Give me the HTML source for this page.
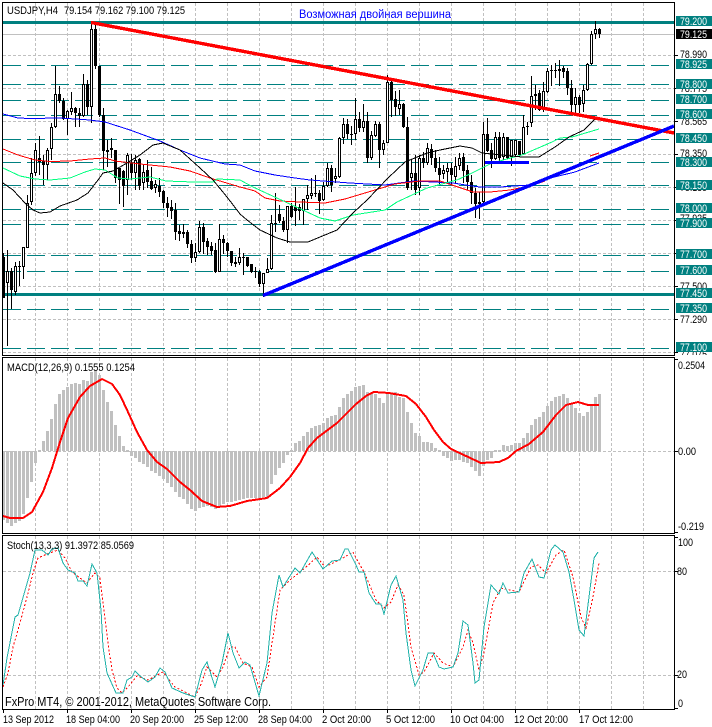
<!DOCTYPE html>
<html><head><meta charset="utf-8"><title>USDJPY,H4</title>
<style>
html,body{margin:0;padding:0;background:#fff}
svg{display:block}
text{font-family:"Liberation Sans",sans-serif;font-size:11px;fill:#000}
.n{fill:none}
</style></head><body>
<svg width="712" height="727" viewBox="0 0 712 727" xmlns="http://www.w3.org/2000/svg">
<rect width="712" height="727" fill="#fff"/>
<!-- grid -->
<g shape-rendering="crispEdges" class="n" fill="none">
<path stroke="#c0c0c0" stroke-dasharray="3 2" d="M35.5 3V355M67.5 3V355M99.5 3V355M131.5 3V355M163.5 3V355M195.5 3V355M227.5 3V355M259.5 3V355M291.5 3V355M323.5 3V355M355.5 3V355M387.5 3V355M419.5 3V355M451.5 3V355M483.5 3V355M515.5 3V355M547.5 3V355M579.5 3V355M611.5 3V355M643.5 3V355M35.5 358V533M67.5 358V533M99.5 358V533M131.5 358V533M163.5 358V533M195.5 358V533M227.5 358V533M259.5 358V533M291.5 358V533M323.5 358V533M355.5 358V533M387.5 358V533M419.5 358V533M451.5 358V533M483.5 358V533M515.5 358V533M547.5 358V533M579.5 358V533M611.5 358V533M643.5 358V533M35.5 536V709M67.5 536V709M99.5 536V709M131.5 536V709M163.5 536V709M195.5 536V709M227.5 536V709M259.5 536V709M291.5 536V709M323.5 536V709M355.5 536V709M387.5 536V709M419.5 536V709M451.5 536V709M483.5 536V709M515.5 536V709M547.5 536V709M579.5 536V709M611.5 536V709M643.5 536V709"/>
<path stroke="#c0c0c0" stroke-dasharray="3 2" d="M3 55.5H674M3 88.5H674M3 121.5H674M3 154.5H674M3 187.5H674M3 220.5H674M3 253.5H674M3 286.5H674M3 319.5H674M3 352.5H674M3 451.5H674M3 571.5H674M3 675.5H674"/>
<path stroke="#c0c0c0" d="M3 34.5H674"/>
<path stroke="#008080" stroke-dasharray="18 6" d="M3 65.5H674M3 84.5H674M3 100.5H674M3 115.5H674M3 139.5H674M3 162.5H674M3 185.5H674M3 209.5H674M3 224.5H674M3 255.5H674M3 271.5H674M3 309.5H674M3 348.5H674"/>
<path stroke="#008080" stroke-width="3" d="M3 22.5H674M3 294.5H674"/>
</g>
<!-- candles -->
<g transform="translate(.5 0)" fill="none" shape-rendering="crispEdges">
<path stroke="#000" d="M3 253V298M7 250V346M11 268V309M15 262V295M19 261V286M23 247V279M27 195V248M31 158V205M35 143V176M39 136V175M43 155V185M47 148V180M51 123V160M55 66V128M59 86V103M63 98V120M67 110V135M71 92V115M75 107V127M79 108V127M83 74V117M87 80V115M91 23V123M95 22V69M99 66V117M103 108V170M107 140V167M111 138V158M115 150V183M119 168V204M123 170V207M127 153V195M131 154V180M135 155V190M139 158V190M143 165V190M147 160V188M151 167V190M155 180V193M159 178V197M163 190V208M167 197V217M171 200V219M175 203V240M179 225V241M183 224V238M187 230V248M191 240V263M195 243V262M199 221V253M203 223V254M207 238V255M211 242V255M215 243V273M219 224V272M223 235V254M227 242V257M231 251V266M235 257V267M239 248V265M243 253V275M247 257V267M251 264V273M255 267V278M259 270V287M263 273V297M267 258V273M271 215V270M275 193V232M279 205V223M283 217V232M287 206V243M291 203V218M295 187V226M299 204V220M303 199V225M307 185V210M311 178V199M315 175V197M319 190V214M323 182V201M327 163V187M331 165V192M335 168V183M339 137V178M343 118V144M347 119V139M351 126V145M355 98V140M359 112V132M363 104V132M367 112V163M371 131V160M375 121V137M379 122V168M383 140V155M387 75V143M391 79V117M395 91V116M399 90V115M403 103V128M407 117V190M411 159V190M415 155V195M419 155V195M423 152V168M427 143V165M431 144V165M435 150V172M439 157V185M443 165V179M447 163V182M451 163V185M455 157V183M459 153V170M463 153V183M467 165V190M471 175V204M475 188V218M479 192V219M483 122V203M487 118V152M491 143V168M495 132V160M499 132V163M503 133V160M507 137V159M511 140V166M515 140V157M519 141V157M523 115V155M527 122V135M531 76V127M535 85V110M539 90V111M543 82V112M547 68V93M551 65V86M555 63V78M559 60V86M563 66V78M567 68V95M571 80V115M575 88V113M579 95V113M583 85V112M587 63V91M591 31V65M595 21V39M599 28V38"/>
<path stroke="#000" stroke-width="3" d="M3 257V298M7 271V283M11 271V290M15 266V292M19 266V267M23 247V267M27 203V248M31 173V202M35 150V173M39 158V162M43 161V165M47 150V165M51 127V149M55 94V127M59 94V101M63 101V119M67 111V119M71 108V112M75 108V113M79 113V116M83 84V116M87 84V107M91 29V107M95 29V66M99 66V115M103 115V151M107 150V152M111 148V150M115 150V178M119 168V180M123 171V186M127 155V180M131 163V173M135 160V173M139 159V186M143 172V183M147 170V182M151 181V189M155 184V188M159 186V192M163 191V203M167 203V208M171 207V211M175 210V232M179 231V234M183 232V234M187 232V244M191 244V258M195 252V258M199 227V252M203 227V242M207 241V247M211 246V251M215 250V272M219 239V272M223 239V243M227 243V251M231 251V263M235 262V264M239 257V263M243 257V258M247 257V266M251 264V272M255 271V272M259 272V284M263 273V284M267 269V273M271 223V269M275 223V224M279 214V221M283 221V230M287 206V230M291 206V217M295 207V211M299 207V211M303 199V211M307 195V199M311 193V196M315 193V194M319 193V201M323 186V200M327 168V186M331 168V185M335 176V179M339 138V177M343 124V138M347 124V134M351 134V135M355 119V134M359 119V128M363 121V128M367 121V158M371 135V158M375 124V136M379 124V150M383 143V150M387 82V143M391 82V100M395 99V107M399 104V109M403 104V127M407 127V188M411 173V178M415 173V190M419 158V188M423 158V163M427 148V163M431 149V158M435 158V168M439 168V175M443 170V174M447 168V172M451 168V175M455 166V177M459 158V166M463 157V171M467 170V182M471 182V193M475 193V204M479 202V204M483 134V202M487 134V151M491 150V159M495 137V159M499 137V158M503 137V157M507 137V158M511 140V157M515 140V155M519 141V155M523 127V154M527 126V127M531 96V123M535 94V96M539 93V110M543 91V110M547 71V92M551 70V71M555 70V71M559 69V71M563 68V72M567 71V88M571 88V105M575 97V105M579 97V105M583 90V104M587 64V90M591 34V64M595 29V34M599 29V34"/>
<path stroke="#fff" d="M7 272V282M15 267V291M23 248V266M27 204V247M31 174V201M35 151V172M47 151V164M51 128V148M55 95V126M67 112V118M71 109V111M83 85V115M91 30V106M127 156V179M135 161V172M143 173V182M155 185V187M195 253V257M199 228V251M219 240V271M239 258V262M263 274V283M267 270V272M271 224V268M287 207V229M303 200V210M307 196V198M311 194V195M323 187V199M327 169V185M335 177V178M339 139V176M343 125V137M355 120V133M363 122V127M371 136V157M375 125V135M383 144V149M387 83V142M399 105V108M411 174V177M419 159V187M427 149V162M443 171V173M447 169V171M455 167V176M459 159V165M483 135V201M495 138V158M503 138V156M511 141V156M515 141V154M523 128V153M531 97V122M543 92V109M547 72V91M575 98V104M583 91V103M587 65V89M591 35V63M595 30V33"/>
</g>
<!-- moving averages -->
<g fill="none" shape-rendering="crispEdges">
<path stroke="#0000ff" d="M3 114L18 118L30 118.5L60 118L90 120L105 122L130 130L160 141L180 150L200 158L225 164L240 165L255 171L275 175L295 178L310 180L350 183L385 185L414 181L453 183L472 186L480 187L500 187L530 185L542 180L575 172L599 163"/>
<path stroke="#ff0000" d="M3 149L18 155L35 160L50 161.5L70 161L90 159L105 158L115 161L140 164L170 167L190 171L210 178L240 187L255 191L265 198L280 201L300 202L325 203L345 199L365 193L385 187L395 184L420 181L440 181L473 192L490 192L510 190L530 186L545 181M590 156L599 153"/>
<path stroke="#00ff7f" d="M3 168L20 176L35 179L50 180L70 178L85 172L95 169L105 170L118 178L130 179L150 177L166 181L193 182L213 182L217 179L240 180L253 187L292 205L320 218L335 221L353 215L385 210L397 202L427 188L457 180L472 173L492 163L522 155L552 142L560 138L572 137L599 129"/>
<path stroke="#000" d="M3 183L13 190L25 203L33 210L40 213L50 212L60 206L77 200L88 193L98 180L103 173L113 171L127 163L140 155L153 145L163 143L180 150L200 168L213 180L227 197L240 214L247 220L260 230L277 238L290 242L308 242L320 237L337 230L353 213L367 200L388 178L405 162L427 153L440 150L460 146L472 148L482 153L522 157L539 157L555 147L569 137L584 130L597 117"/>
<!-- trend lines -->
<path stroke="#ff0000" stroke-width="3.4" d="M91 22.5L674 133"/>
<path stroke="#0000ff" stroke-width="3.4" d="M263 295.5L674 126"/>
<path stroke="#0000ff" stroke-width="3" d="M485 162.5H529"/>
</g>
<!-- MACD histogram -->
<g transform="translate(.5 0)" shape-rendering="crispEdges">
<path fill="none" stroke="#c0c0c0" stroke-width="3" d="M3 451V520M7 451V523M11 451V526M15 451V523M19 451V521M23 451V514M27 451V498M31 451V482M35 451V463M39 450V452M43 441V451M47 431V451M51 419V451M55 404V451M59 394V451M63 390V451M67 387V451M71 384V451M75 383V451M79 384V451M83 380V451M87 381V451M91 372V451M95 370V451M99 375V451M103 390V451M107 402V451M111 411V451M115 425V451M119 436V451M123 446V451M127 450V452M131 451V456M135 451V458M139 451V462M143 451V464M147 451V467M151 451V471M155 451V473M159 451V476M163 451V479M167 451V483M171 451V487M175 451V492M179 451V497M183 451V499M187 451V504M191 451V509M195 451V511M199 451V508M203 451V507M207 451V506M211 451V507M215 451V509M219 451V507M223 451V504M227 451V502M231 451V502M235 451V501M239 451V500M243 451V499M247 451V498M251 451V498M255 451V498M259 451V498M263 451V497M267 451V497M271 451V484M275 451V475M279 451V468M283 451V463M287 451V455M291 450V452M295 443V451M299 441V451M303 436V451M307 432V451M311 428V451M315 426V451M319 425V451M323 423V451M327 418V451M331 416V451M335 415V451M339 407V451M343 398V451M347 394V451M351 391V451M355 387V451M359 386V451M363 385V451M367 392V451M371 393V451M375 394V451M379 398V451M383 403V451M387 394V451M391 393V451M395 392V451M399 397V451M403 398V451M407 412V451M411 423V451M415 433V451M419 436V451M423 442V451M427 442V451M431 443V451M435 448V451M439 450V452M443 451V456M447 451V458M451 451V461M455 451V460M459 451V460M463 451V462M467 451V463M471 451V467M475 451V471M479 451V476M483 451V466M487 451V460M491 451V458M495 450V452M499 450V452M503 445V451M507 446V451M511 445V451M515 443V451M519 443V451M523 438V451M527 433V451M531 425V451M535 419V451M539 417V451M543 412V451M547 406V451M551 401V451M555 397V451M559 396V451M563 394V451M567 398V451M571 404V451M575 408V451M579 413V451M583 416V451M587 412V451M591 406V451M595 397V451M599 394V451"/>
</g>
<g fill="none" shape-rendering="crispEdges">
<path stroke="#ff0000" stroke-width="2" d="M3 516L10 518L23 518L32 512L43 492L52 468L60 442L68 418L80 397L90 386L102 379L112 384L120 395L128 412L137 432L147 450L157 462L167 469L180 482L190 490L202 501L217 507L230 506L247 501L267 498L280 488L290 477L300 463L308 448L317 438L337 423L347 413L356 404L366 396L374 392L389 393L406 396L416 404L426 417L434 430L443 442L451 449L466 456L481 463L499 462L508 458L516 451L529 444L543 432L556 415L566 405L578 402L588 405L599 405"/>
<path stroke="#ff0000" stroke-dasharray="2 2" d="M3 687L8 673L13 647L18 630L27 597L33 573L38 558L47 554L58 550L65 558L72 572L80 578L87 583L95 573L100 578L103 602L108 643L112 670L117 688L122 693L128 687L137 676L148 680L163 672L175 687L195 697L200 687L207 667L217 677L223 667L230 647L235 647L243 663L252 667L259 687L267 677L274 630L280 590L290 580L305 568L317 557L325 567L343 558L353 552L356 558L364 572L376 600L384 608L391 602L398 585L404 595L411 647L419 675L424 672L434 653L443 663L453 667L463 647L468 630L473 643L479 670L484 653L493 603L501 588L519 592L531 567L538 565L546 573L556 555L564 550L573 577L581 617L586 628L593 597L599 563"/>
<path stroke="#20b2aa" d="M3 685L7 658L15 617L18 615L30 573L35 550L42 550L48 555L52 549L58 548L63 563L68 570L75 573L78 581L83 581L87 586L92 564L97 573L101 610L103 647L107 673L116 693L123 693L127 680L132 677L135 671L140 676L148 682L155 677L160 668L165 672L172 688L183 693L195 697L202 670L207 662L215 687L222 663L228 633L233 653L239 668L245 662L250 665L259 696L267 663L272 613L279 575L283 587L295 568L300 573L312 552L323 569L332 561L340 560L345 549L348 549L356 565L359 572L364 572L369 593L376 604L381 604L384 614L391 585L396 576L403 600L406 633L411 670L415 686L423 670L428 653L433 653L439 667L444 669L453 667L458 653L463 621L468 625L473 663L475 683L479 680L484 627L491 585L499 594L503 583L508 593L519 592L524 573L532 559L539 577L544 578L551 550L555 545L563 552L569 572L574 600L579 630L584 636L589 597L594 558L598 552"/>
</g>
<!-- axis labels under boxes -->
<text lengthAdjust="spacingAndGlyphs" x="680" y="58" textLength="27">78.990</text>
<text lengthAdjust="spacingAndGlyphs" x="680" y="92" textLength="27">78.775</text>
<text lengthAdjust="spacingAndGlyphs" x="680" y="125" textLength="27">78.565</text>
<text lengthAdjust="spacingAndGlyphs" x="680" y="157" textLength="27">78.350</text>
<text lengthAdjust="spacingAndGlyphs" x="680" y="191" textLength="27">78.135</text>
<text lengthAdjust="spacingAndGlyphs" x="680" y="222" textLength="27">77.925</text>
<text lengthAdjust="spacingAndGlyphs" x="680" y="257" textLength="27">77.715</text>
<text lengthAdjust="spacingAndGlyphs" x="680" y="290" textLength="27">77.500</text>
<text lengthAdjust="spacingAndGlyphs" x="680" y="323" textLength="27">77.290</text>
<text lengthAdjust="spacingAndGlyphs" x="680" y="358" textLength="27">77.075</text>
<rect x="675" y="355" width="37" height="6" fill="#fff" shape-rendering="crispEdges"/>
<g fill="none" shape-rendering="crispEdges">
<!-- frames -->
<path stroke="#000" d="M2.5 2.5H674.5V355.5H2.5ZM2.5 357.5H674.5V533.5H2.5ZM2.5 535.5H674.5V709.5H2.5Z"/>
<!-- ticks -->
<path stroke="#000" d="M675 55.5h3M675 88.5h3M675 121.5h3M675 154.5h3M675 187.5h3M675 220.5h3M675 253.5h3M675 286.5h3M675 319.5h3M675 352.5h3M675 359.5h3M675 451.5h3M675 532.5h3M675 537.5h3M675 571.5h3M675 675.5h3M675 708.5h3M3.5 710v3M67.5 710v3M131.5 710v3M195.5 710v3M259.5 710v3M323.5 710v3M387.5 710v3M451.5 710v3M515.5 710v3M579.5 710v3"/>
</g>
<!-- boxes -->
<g fill="#008080" shape-rendering="crispEdges">
<rect x="676" y="16" width="36" height="10"/><rect x="676" y="59" width="36" height="10"/><rect x="676" y="79" width="36" height="10"/><rect x="676" y="94" width="36" height="10"/><rect x="676" y="109" width="36" height="10"/><rect x="676" y="133" width="36" height="10"/><rect x="676" y="157" width="36" height="10"/><rect x="676" y="180" width="36" height="10"/><rect x="676" y="203" width="36" height="10"/><rect x="676" y="218" width="36" height="10"/><rect x="676" y="249" width="36" height="10"/><rect x="676" y="265" width="36" height="10"/><rect x="676" y="288" width="36" height="10"/><rect x="676" y="303" width="36" height="10"/><rect x="676" y="342" width="36" height="10"/>
<rect x="676" y="29" width="36" height="10" fill="#000"/>
</g>
<g>
<text lengthAdjust="spacingAndGlyphs" style="fill:#fff" x="680" y="25" textLength="27">79.200</text>
<text lengthAdjust="spacingAndGlyphs" style="fill:#fff" x="680" y="38" textLength="27">79.125</text>
<text lengthAdjust="spacingAndGlyphs" style="fill:#fff" x="680" y="68" textLength="27">78.925</text>
<text lengthAdjust="spacingAndGlyphs" style="fill:#fff" x="680" y="88" textLength="27">78.800</text>
<text lengthAdjust="spacingAndGlyphs" style="fill:#fff" x="680" y="103" textLength="27">78.700</text>
<text lengthAdjust="spacingAndGlyphs" style="fill:#fff" x="680" y="118" textLength="27">78.600</text>
<text lengthAdjust="spacingAndGlyphs" style="fill:#fff" x="680" y="142" textLength="27">78.450</text>
<text lengthAdjust="spacingAndGlyphs" style="fill:#fff" x="680" y="166" textLength="27">78.300</text>
<text lengthAdjust="spacingAndGlyphs" style="fill:#fff" x="680" y="189" textLength="27">78.150</text>
<text lengthAdjust="spacingAndGlyphs" style="fill:#fff" x="680" y="212" textLength="27">78.000</text>
<text lengthAdjust="spacingAndGlyphs" style="fill:#fff" x="680" y="227" textLength="27">77.900</text>
<text lengthAdjust="spacingAndGlyphs" style="fill:#fff" x="680" y="258" textLength="27">77.700</text>
<text lengthAdjust="spacingAndGlyphs" style="fill:#fff" x="680" y="274" textLength="27">77.600</text>
<text lengthAdjust="spacingAndGlyphs" style="fill:#fff" x="680" y="297" textLength="27">77.450</text>
<text lengthAdjust="spacingAndGlyphs" style="fill:#fff" x="680" y="312" textLength="27">77.350</text>
<text lengthAdjust="spacingAndGlyphs" style="fill:#fff" x="680" y="351" textLength="27">77.100</text>
</g>
<!-- other labels -->
<text lengthAdjust="spacingAndGlyphs" x="7" y="14" textLength="51">USDJPY,H4</text>
<text lengthAdjust="spacingAndGlyphs" x="64" y="14" textLength="121">79.154 79.162 79.100 79.125</text>
<text lengthAdjust="spacingAndGlyphs" x="299" y="18" textLength="152" style="fill:#0000ff;font-size:11.5px">Возможная двойная вершина</text>
<text lengthAdjust="spacingAndGlyphs" x="7" y="371" textLength="128">MACD(12,26,9) 0.1555 0.1254</text>
<text lengthAdjust="spacingAndGlyphs" x="678" y="369" textLength="27">0.2504</text>
<text lengthAdjust="spacingAndGlyphs" x="678" y="455" textLength="18">0.00</text>
<text lengthAdjust="spacingAndGlyphs" x="678" y="530" textLength="26">-0.219</text>
<text lengthAdjust="spacingAndGlyphs" x="7" y="549" textLength="127">Stoch(13,3,3) 91.3972 85.0569</text>
<text lengthAdjust="spacingAndGlyphs" x="678" y="546" textLength="15">100</text>
<text lengthAdjust="spacingAndGlyphs" x="677" y="575" textLength="10">80</text>
<text lengthAdjust="spacingAndGlyphs" x="677" y="678" textLength="10">20</text>
<text lengthAdjust="spacingAndGlyphs" x="678" y="707" textLength="5">0</text>
<text lengthAdjust="spacingAndGlyphs" x="5" y="706" textLength="266" style="font-size:12.5px">FxPro MT4, © 2001-2012, MetaQuotes Software Corp.</text>
<text lengthAdjust="spacingAndGlyphs" x="3" y="723" textLength="51">13 Sep 2012</text>
<text lengthAdjust="spacingAndGlyphs" x="66" y="723" textLength="54">18 Sep 04:00</text>
<text lengthAdjust="spacingAndGlyphs" x="130" y="723" textLength="54">20 Sep 20:00</text>
<text lengthAdjust="spacingAndGlyphs" x="194" y="723" textLength="54">25 Sep 12:00</text>
<text lengthAdjust="spacingAndGlyphs" x="258" y="723" textLength="54">28 Sep 04:00</text>
<text lengthAdjust="spacingAndGlyphs" x="322" y="723" textLength="49">2 Oct 20:00</text>
<text lengthAdjust="spacingAndGlyphs" x="386" y="723" textLength="49">5 Oct 12:00</text>
<text lengthAdjust="spacingAndGlyphs" x="450" y="723" textLength="54">10 Oct 04:00</text>
<text lengthAdjust="spacingAndGlyphs" x="514" y="723" textLength="54">12 Oct 20:00</text>
<text lengthAdjust="spacingAndGlyphs" x="579" y="723" textLength="54">17 Oct 12:00</text>
</svg>
</body></html>
